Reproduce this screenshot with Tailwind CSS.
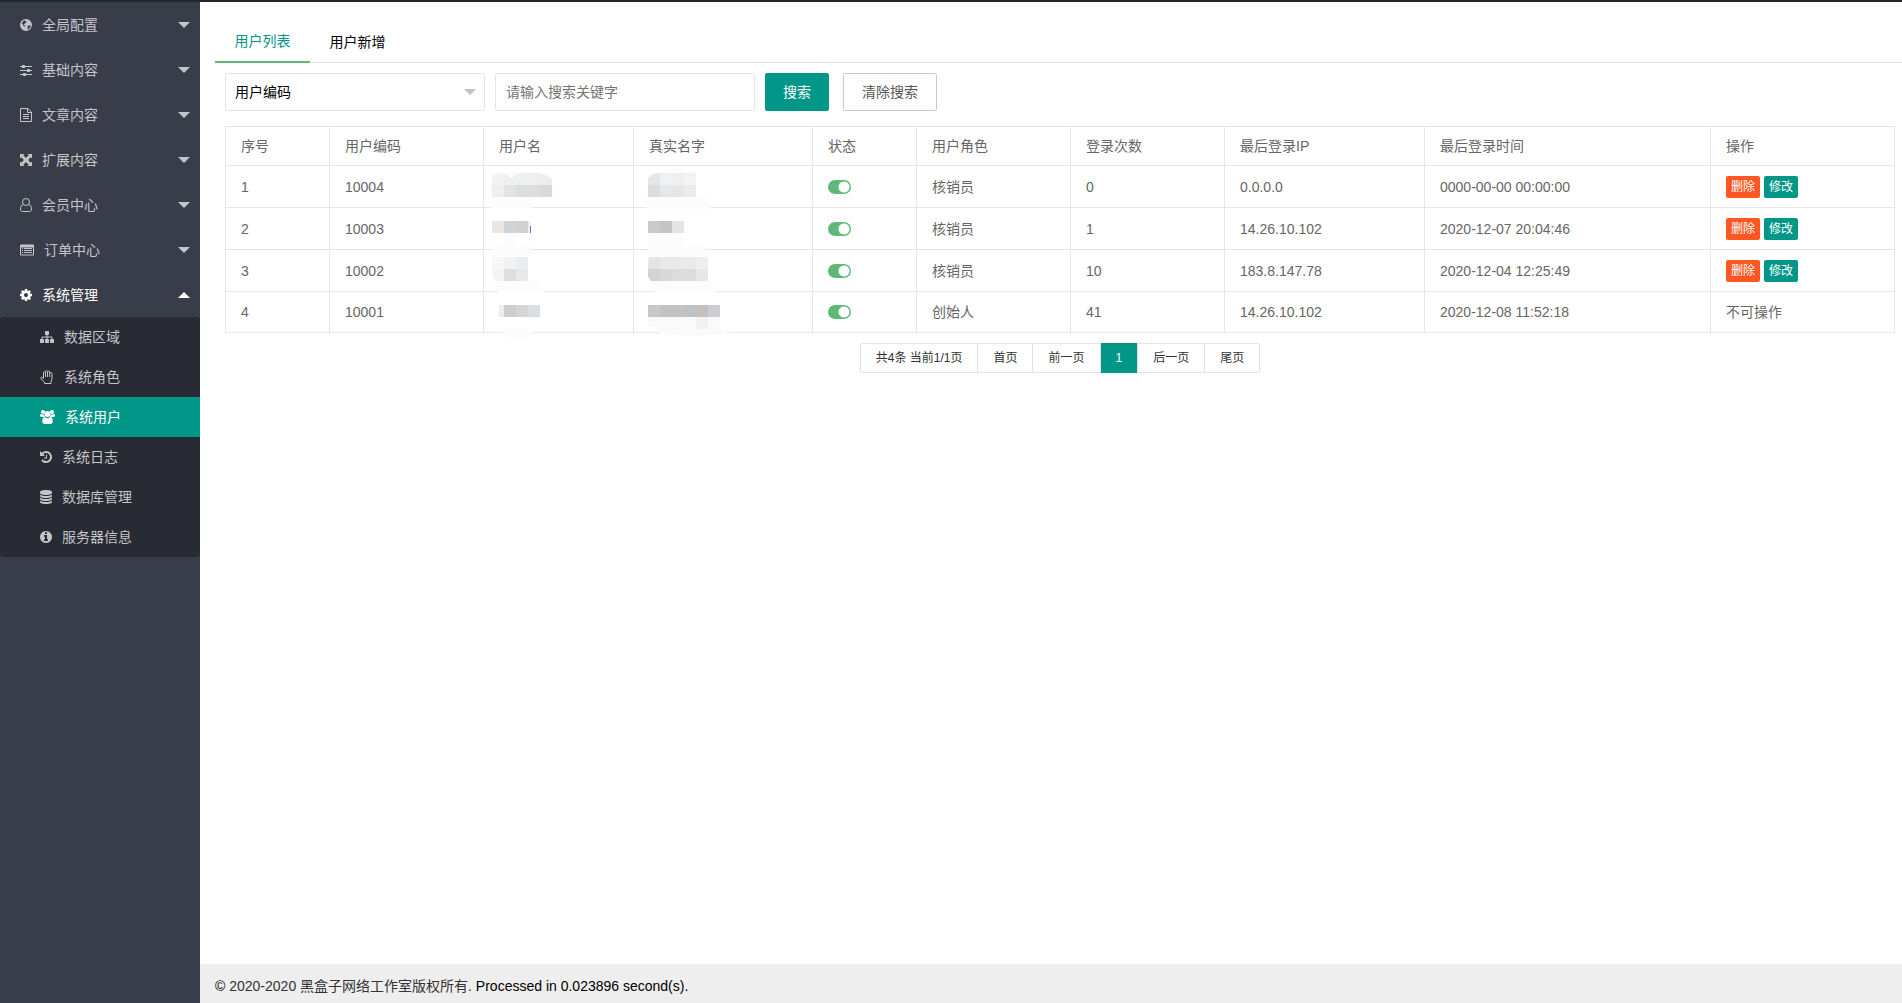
<!DOCTYPE html>
<html lang="zh-CN">
<head>
<meta charset="utf-8">
<title>用户列表</title>
<script src="https://cdn.jsdelivr.net/npm/@tailwindcss/browser@4"></script>
</head>
<body class="flex min-h-screen flex-col border-t-2 border-[#23262e] bg-white font-['Liberation_Sans','Noto_Sans_CJK_SC',sans-serif] text-sm text-[#666]">
<div class="flex flex-1">

<nav class="w-[200px] shrink-0 bg-[#393d49] text-[#c4c5c8]">
  <a href="#" class="flex h-[45px] items-center gap-2.5 pr-2.5 pl-5">
    <svg class="h-3.5 w-3" viewBox="0 0 12 14" fill="currentColor"><path fill-rule="evenodd" d="M6 1a6 6 0 1 0 0 12A6 6 0 0 0 6 1ZM5.200 2.200 4.600 3l.8.3.6-.5.7.6-.8.9.2.7-1 .2-.8.9-.9.1.5.9.9.2.6.9-.5.5-1.400-1-.9-.9-.6-1.500.4-1.100L3.600 2.700ZM7.700 8.100l1.100-.7 1.400.2.5-.4-.2 1.700-1 1.400-1.300 1.100-.6-.3.1-1.500Z"/></svg>
    <span>全局配置</span>
    <svg class="ml-auto h-1.5 w-3" viewBox="0 0 12 6" fill="currentColor"><path d="M0 0h12L6 6Z"/></svg>
  </a>
  <a href="#" class="flex h-[45px] items-center gap-2.5 pr-2.5 pl-5">
    <svg class="h-3.5 w-3" viewBox="0 0 12 14" fill="currentColor"><path d="M0 3h12v1H0zM0 7h12v1H0zM0 11h12v1H0z"/><rect x="2" y="2" width="3" height="3" rx=".5"/><rect x="7" y="6" width="3" height="3" rx=".5"/><rect x="3" y="10" width="3" height="3" rx=".5"/></svg>
    <span>基础内容</span>
    <svg class="ml-auto h-1.5 w-3" viewBox="0 0 12 6" fill="currentColor"><path d="M0 0h12L6 6Z"/></svg>
  </a>
  <a href="#" class="flex h-[45px] items-center gap-2.5 pr-2.5 pl-5">
    <svg class="h-3.5 w-3" viewBox="0 0 12 14" fill="none" stroke="currentColor"><path d="M.5.5h7.300l3.700 3.700v9.300H.5ZM7.500.5v4h4M3 6.500h6M3 8.500h6M3 10.500h6"/></svg>
    <span>文章内容</span>
    <svg class="ml-auto h-1.5 w-3" viewBox="0 0 12 6" fill="currentColor"><path d="M0 0h12L6 6Z"/></svg>
  </a>
  <a href="#" class="flex h-[45px] items-center gap-2.5 pr-2.5 pl-5">
    <svg class="h-3.5 w-3" viewBox="0 0 12 14" fill="currentColor"><path d="M0 1h4.500L3.300 2.300 6 5l2.700-2.700L7.500 1H12v4.500l-1.300-1.200L8 7l2.700 2.700L12 8.500V13H7.500l1.200-1.300L6 9l-2.700 2.700L4.500 13H0V8.500l1.300 1.200L4 7 1.300 4.300 0 5.500Z"/></svg>
    <span>扩展内容</span>
    <svg class="ml-auto h-1.5 w-3" viewBox="0 0 12 6" fill="currentColor"><path d="M0 0h12L6 6Z"/></svg>
  </a>
  <a href="#" class="flex h-[45px] items-center gap-2.5 pr-2.5 pl-5">
    <svg class="h-3.5 w-3" viewBox="0 0 12 14" fill="none" stroke="currentColor"><circle cx="6" cy="4" r="3.500"/><path d="M3.300 6.500C1.300 6.900.5 8.700.5 11c0 1.500.8 2.500 2 2.500h7c1.200 0 2-1 2-2.500 0-2.300-.8-4.100-2.800-4.500"/></svg>
    <span>会员中心</span>
    <svg class="ml-auto h-1.5 w-3" viewBox="0 0 12 6" fill="currentColor"><path d="M0 0h12L6 6Z"/></svg>
  </a>
  <a href="#" class="flex h-[45px] items-center gap-2.5 pr-2.5 pl-5">
    <svg class="h-3.5 w-3.5" viewBox="0 0 14 14" fill="currentColor"><path fill-rule="evenodd" d="M1 1.500h12a1 1 0 0 1 1 1v9a1 1 0 0 1-1 1H1a1 1 0 0 1-1-1v-9a1 1 0 0 1 1-1ZM1 4.500v7h12v-7Z"/><path d="M2 5h1v1H2zM4 5h8v1H4zM2 7h1v1H2zM4 7h8v1H4zM2 9h1v1H2zM4 9h8v1H4z"/></svg>
    <span>订单中心</span>
    <svg class="ml-auto h-1.5 w-3" viewBox="0 0 12 6" fill="currentColor"><path d="M0 0h12L6 6Z"/></svg>
  </a>
  <a href="#" class="flex h-[45px] items-center gap-2.5 pr-2.5 pl-5 text-white">
    <svg class="h-3.5 w-3" viewBox="128 0 1536 1792" fill="currentColor"><path d="M1152 896q0-106-75-181t-181-75-181 75-75 181 75 181 181 75 181-75 75-181zm512-109v222q0 12-8 23t-20 13l-185 28q-19 54-39 91 35 50 107 138 10 12 10 25t-9 23q-27 37-99 108t-94 71q-12 0-26-9l-138-108q-44 23-91 38-16 136-29 186-7 28-36 28h-222q-14 0-24.500-8.500t-11.500-21.500l-28-184q-49-16-90-37l-141 107q-10 9-25 9-14 0-25-11-126-114-165-168-7-10-7-23 0-12 8-23 15-21 51-66.500t54-70.500q-27-50-41-99l-183-27q-13-2-21-12.500t-8-23.500v-222q0-12 8-23t19-13l186-28q14-46 39-92-40-57-107-138-10-12-10-24 0-10 9-23 26-36 98.500-107.500t94.500-71.500q13 0 26 10l138 107q44-23 91-38 16-136 29-186 7-28 36-28h222q14 0 24.500 8.500t11.500 21.500l28 184q49 16 90 37l142-107q9-9 24-9 13 0 25 10 129 119 165 170 7 8 7 22 0 12-8 23-15 21-51 66.500t-54 70.500q26 50 41 98l183 28q13 2 21 12.500t8 23.500z"/></svg>
    <span>系统管理</span>
    <svg class="ml-auto h-1.5 w-3" viewBox="0 0 12 6" fill="currentColor"><path d="M0 6h12L6 0Z"/></svg>
  </a>
  <div class="rounded-sm bg-[#282b33]">
    <a href="#" class="flex h-10 items-center gap-2.5 pl-10">
      <svg class="h-3.5 w-3.5" viewBox="0 0 1792 1792" fill="currentColor"><path d="M1792 1248v320q0 40-28 68t-68 28h-320q-40 0-68-28t-28-68v-320q0-40 28-68t68-28h96v-192h-512v192h96q40 0 68 28t28 68v320q0 40-28 68t-68 28h-320q-40 0-68-28t-28-68v-320q0-40 28-68t68-28h96v-192h-512v192h96q40 0 68 28t28 68v320q0 40-28 68t-68 28h-320q-40 0-68-28t-28-68v-320q0-40 28-68t68-28h96v-192q0-52 38-90t90-38h512v-192h-96q-40 0-68-28t-28-68v-320q0-40 28-68t68-28h320q40 0 68 28t28 68v320q0 40-28 68t-68 28h-96v192h512q52 0 90 38t38 90v192h96q40 0 68 28t28 68z"/></svg>
      <span>数据区域</span>
    </a>
    <a href="#" class="flex h-10 items-center gap-2.5 pl-10">
      <svg class="h-3.5 w-3.5" viewBox="0 0 14 14" fill="none" stroke="currentColor" stroke-linejoin="round"><path d="M4.500 13.500v-1.200L1 8.900C0 7.800 1.400 6.600 2.400 7.500L3.500 8.500V2.800c0-1.300 2-1.300 2 0 0-.4 0-1 0-1.200 0-1.400 2-1.400 2 0v.6c0-1.300 2.200-1.300 2.200 0v1.200c0-1.200 2.300-1.200 2.300 0v4.600c0 1.600-1 2.300-1 4.200v1.300ZM5.500 2.800V7M7.500 2v5M9.700 2.500V7"/></svg>
      <span>系统角色</span>
    </a>
    <a href="#" class="flex h-10 items-center gap-2.5 bg-[#009688] pl-10 text-white">
      <svg class="h-3.5 w-[15px]" viewBox="0 0 15 14" fill="currentColor"><circle cx="3" cy="2" r="2"/><circle cx="12" cy="2" r="2"/><circle cx="7.500" cy="4" r="2.900"/><path d="M1.300 4c1 .7 2.200.7 3 .3-.1 1 .3 2 .9 2.700H1.500C.5 7 0 6.500 0 5.800 0 4.700.4 3.700 1.300 4ZM13.700 4c-1 .7-2.200.7-3 .3.1 1-.3 2-.9 2.700h3.700c1 0 1.500-.5 1.500-1.200 0-1.100-.4-2.100-1.300-1.800ZM4.500 7.100c1.800 1.500 4.200 1.500 6 0 1.500.1 2.200 2 2.200 4.500 0 1.500-.9 2.400-2.200 2.400h-6c-1.300 0-2.200-.9-2.200-2.400 0-2.500.7-4.400 2.200-4.500Z"/></svg>
      <span>系统用户</span>
    </a>
    <a href="#" class="flex h-10 items-center gap-2.5 pl-10">
      <svg class="h-3.5 w-3" viewBox="128 0 1536 1792" fill="currentColor"><path d="M1664 896q0 156-61 298t-164 245-245 164-298 61q-172 0-327-72.500t-264-204.500q-7-10-6.500-22.500t8.500-20.500l137-138q10-9 25-9 16 2 23 12 73 95 179 147t225 52q104 0 198.500-40.500t163.500-109.500 109.500-163.500 40.500-198.500-40.500-198.500-109.500-163.500-163.500-109.500-198.500-40.500q-98 0-188 35.500t-160 101.500l137 138q31 30 14 69-17 40-59 40h-448q-26 0-45-19t-19-45v-448q0-42 40-59 39-17 69 14l130 129q107-101 244.500-156.500t284.500-55.500q156 0 298 61t245 164 164 245 61 298zm-640-288v448q0 14-9 23t-23 9h-320q-14 0-23-9t-9-23v-64q0-14 9-23t23-9h224v-352q0-14 9-23t23-9h64q14 0 23 9t9 23z"/></svg>
      <span>系统日志</span>
    </a>
    <a href="#" class="flex h-10 items-center gap-2.5 pl-10">
      <svg class="h-3.5 w-3" viewBox="128 0 1536 1792" fill="currentColor"><path d="M896 768q237 0 443-43t325-127v170q0 69-103 128t-280 93.500-385 34.500-385-34.500-280-93.500-103-128v-170q119 84 325 127t443 43zm0 768q237 0 443-43t325-127v170q0 69-103 128t-280 93.500-385 34.500-385-34.500-280-93.500-103-128v-170q119 84 325 127t443 43zm0-384q237 0 443-43t325-127v170q0 69-103 128t-280 93.500-385 34.500-385-34.500-280-93.500-103-128v-170q119 84 325 127t443 43zm0-1152q208 0 385 34.500t280 93.500 103 128v128q0 69-103 128t-280 93.500-385 34.500-385-34.500-280-93.500-103-128v-128q0-69 103-128t280-93.500 385-34.500z"/></svg>
      <span>数据库管理</span>
    </a>
    <a href="#" class="flex h-10 items-center gap-2.5 pl-10">
      <svg class="h-3.5 w-3" viewBox="128 0 1536 1792" fill="currentColor"><path d="M1152 1376v-160q0-14-9-23t-23-9h-96v-512q0-14-9-23t-23-9h-320q-14 0-23 9t-9 23v160q0 14 9 23t23 9h96v320h-96q-14 0-23 9t-9 23v160q0 14 9 23t23 9h448q14 0 23-9t9-23zm-128-896v-160q0-14-9-23t-23-9h-192q-14 0-23 9t-9 23v160q0 14 9 23t23 9h192q14 0 23-9t9-23zm640 416q0 209-103 385.500t-279.500 279.500-385.500 103-385.500-103-279.500-279.500-103-385.500 103-385.500 279.500-279.500 385.500-103 385.500 103 279.500 279.500 103 385.500z"/></svg>
      <span>服务器信息</span>
    </a>
  </div>
</nav>

<div class="flex min-w-0 flex-1 flex-col">
  <main class="flex-1 pt-5 pl-[15px]">
    <div class="flex border-b border-[#e6e6e6] leading-10 text-black">
      <a href="#" class="-mb-px w-[95px] border-b-2 border-[#5fb878] text-center leading-[39px] text-[#009688]">用户列表</a>
      <a href="#" class="w-[95px] text-center">用户新增</a>
    </div>

    <div class="pt-2.5 pr-[7px] pl-2.5">
      <form class="flex">
        <div class="relative mr-2.5 w-[260px]">
          <select aria-label="搜索字段" class="h-[38px] w-full appearance-none rounded-xs border border-[#e6e6e6] bg-white pr-8 pl-[9px] text-black">
            <option>用户编码</option>
          </select>
          <svg class="pointer-events-none absolute top-4 right-[9px] h-1.5 w-3" viewBox="0 0 12 6" fill="#c2c2c2"><path d="M0 0h12L6 6Z"/></svg>
        </div>
        <input type="text" aria-label="搜索关键字" placeholder="请输入搜索关键字" class="mr-2.5 h-[38px] w-[260px] rounded-xs border border-[#e6e6e6] px-2.5 placeholder:text-[#757575]">
        <button type="button" class="mr-3.5 h-[38px] w-16 rounded-xs bg-[#009688] text-white">搜索</button>
        <button type="button" class="h-[38px] w-[94px] rounded-xs border border-[#c9c9c9] text-[#555]">清除搜索</button>
      </form>

      <table class="mt-[15px] w-full table-fixed border-collapse [&_td]:border [&_td]:border-[#e6e6e6] [&_td]:px-[15px] [&_th]:border [&_th]:border-[#e6e6e6] [&_th]:px-[15px] [&_th]:text-left [&_th]:font-normal">
        <colgroup>
          <col class="w-[104px]"><col class="w-[154px]"><col class="w-[150px]"><col class="w-[179px]"><col class="w-[104px]"><col class="w-[154px]"><col class="w-[154px]"><col class="w-[200px]"><col class="w-[286px]"><col class="w-[184px]">
        </colgroup>
        <thead>
          <tr class="h-[39px]"><th>序号</th><th>用户编码</th><th>用户名</th><th>真实名字</th><th>状态</th><th>用户角色</th><th>登录次数</th><th>最后登录IP</th><th>最后登录时间</th><th>操作</th></tr>
        </thead>
        <tbody>
          <tr class="h-[42px]">
            <td>1</td><td>10004</td>
            <td class="relative">
              <svg class="absolute top-0 left-0 h-[42px] w-[90px] overflow-visible" viewBox="0 0 90 42"><path fill="#fcfcfc" d="M5 18Q7 5 20 6Q50 2 68 13L70 30Q62 33 56 30H50Q50 37 47 42H7Q4 30 5 18Z"/><path fill="#f2f2f2" d="M8 19V12Q13 5 21 8L28 12V19Z"/><path fill="#eeeff0" d="M20 19V9L28 12Q31 7 38 7H54V19Z"/><path fill="#ededed" d="M54 7Q64 9 68 13V19H54Z"/><path fill="#f0efee" d="M8 19h12v12H8z"/><path fill="#e1e3e6" d="M20 19h12v12H20z"/><path fill="#dcdddd" d="M32 19h24v12H32z"/><path fill="#d9d9d9" d="M56 19h12v12H56z"/></svg>
            </td>
            <td class="relative">
              <svg class="absolute top-0 left-0 h-[42px] w-[90px] overflow-visible" viewBox="0 0 90 42"><path fill="#fcfcfc" d="M20 10Q36-3 62 5V31H74L77 43H12V31Z"/><path fill="#e6e6e6" d="M14 19V12Q18 7 26 7V19Z"/><path fill="#eff1f4" d="M26 7h12v12H26z"/><path fill="#efefee" d="M38 7h12v12H38z"/><path fill="#f3f3f4" d="M50 7h12v12H50z"/><path fill="#dcdcdc" d="M14 19h12v12H14z"/><path fill="#e6e7e9" d="M26 19h12v12H26z"/><path fill="#e7e6e4" d="M38 19h12v12H38z"/><path fill="#e9ebee" d="M50 19h12v12H50z"/></svg>
            </td>
            <td><input type="checkbox" checked aria-label="状态" class="block h-3.5 w-[23px] appearance-none rounded-full bg-[#5fb878] bg-[radial-gradient(circle_at_16px_7px,#fff_5px,transparent_6px)]"></td>
            <td>核销员</td><td>0</td><td>0.0.0.0</td><td>0000-00-00 00:00:00</td>
            <td><div class="flex gap-1"><button type="button" class="h-[22px] w-[34px] rounded-xs bg-[#ff5722] text-xs text-white">删除</button><button type="button" class="h-[22px] w-[34px] rounded-xs bg-[#009688] text-xs text-white">修改</button></div></td>
          </tr>
          <tr class="h-[42px]">
            <td>2</td><td>10003</td>
            <td class="relative">
              <svg class="absolute top-0 left-0 h-[42px] w-[90px] overflow-visible" viewBox="0 0 90 42"><path fill="#fcfcfc" d="M20 25h12v12H20zM7 37H46L48 48H8Z"/><path fill="#e9e6e3" d="M8 13h12v12H8z"/><path fill="#cfd4d8" d="M20 13h12v12H20z"/><path fill="#d1d1d2" d="M32 13h12v12H32z"/><path fill="#eee" d="M44 13h2v12h-2z"/><path fill="#5b7fc4" d="M46 18h1v7h-1z"/></svg>
            </td>
            <td class="relative">
              <svg class="absolute top-0 left-0 h-[42px] w-[90px] overflow-visible" viewBox="0 0 90 42"><path fill="#fcfcfc" d="M14 25h36v12h19v4l12 4v4H14z"/><path fill="#cacac9" d="M14 13h12v12H14z"/><path fill="#c5c4c3" d="M26 13h12v12H26z"/><path fill="#e2e4e7" d="M38 13h12v12H38z"/></svg>
            </td>
            <td><input type="checkbox" checked aria-label="状态" class="block h-3.5 w-[23px] appearance-none rounded-full bg-[#5fb878] bg-[radial-gradient(circle_at_16px_7px,#fff_5px,transparent_6px)]"></td>
            <td>核销员</td><td>1</td><td>14.26.10.102</td><td>2020-12-07 20:04:46</td>
            <td><div class="flex gap-1"><button type="button" class="h-[22px] w-[34px] rounded-xs bg-[#ff5722] text-xs text-white">删除</button><button type="button" class="h-[22px] w-[34px] rounded-xs bg-[#009688] text-xs text-white">修改</button></div></td>
          </tr>
          <tr class="h-[42px]">
            <td>3</td><td>10002</td>
            <td class="relative">
              <svg class="absolute top-0 left-0 h-[42px] w-[90px] overflow-visible" viewBox="0 0 90 42"><path fill="#fcfcfc" d="M10 31H55L60 43H14Z"/><path fill="#f7f7f7" d="M8 7h12v12H8z"/><path fill="#f2f2f2" d="M20 7h12v12H20z"/><path fill="#ebecef" d="M32 7h12v12H32z"/><path fill="#f3f3f3" d="M8 19h12v12H11L8 25z"/><path fill="#dededf" d="M20 19h12v12H20z"/><path fill="#e7e9ec" d="M32 19h12v12H32z"/></svg>
            </td>
            <td class="relative">
              <svg class="absolute top-0 left-0 h-[42px] w-[90px] overflow-visible" viewBox="0 0 90 42"><path fill="#fcfcfc" d="M16 31H78L83 43H20Z"/><path fill="#e6e4e2" d="M15 7h11v12H14v-6z"/><path fill="#e9e9ea" d="M26 7h24v12H26z"/><path fill="#eaeaea" d="M50 7h12v12H50z"/><path fill="#eceef1" d="M62 7h12v12H62z"/><path fill="#d7d3d0" d="M14 19h12v12h-9l-3-4z"/><path fill="#d6d8dc" d="M26 19h12v12H26z"/><path fill="#dcdcdc" d="M38 19h24v12H38z"/><path fill="#e6e8e8" d="M62 19h12v12H62z"/></svg>
            </td>
            <td><input type="checkbox" checked aria-label="状态" class="block h-3.5 w-[23px] appearance-none rounded-full bg-[#5fb878] bg-[radial-gradient(circle_at_16px_7px,#fff_5px,transparent_6px)]"></td>
            <td>核销员</td><td>10</td><td>183.8.147.78</td><td>2020-12-04 12:25:49</td>
            <td><div class="flex gap-1"><button type="button" class="h-[22px] w-[34px] rounded-xs bg-[#ff5722] text-xs text-white">删除</button><button type="button" class="h-[22px] w-[34px] rounded-xs bg-[#009688] text-xs text-white">修改</button></div></td>
          </tr>
          <tr class="h-[41px]">
            <td>4</td><td>10001</td>
            <td class="relative">
              <svg class="absolute top-0 left-0 h-[42px] w-[90px] overflow-visible" viewBox="0 0 90 42"><path fill="#fcfcfc" d="M18 37H50Q46 49 34 49T18 37Z"/><path fill="#ededec" d="M15 13h5v12h-5z"/><path fill="#cfcdcb" d="M20 13h12v12H20z"/><path fill="#d5d5d5" d="M32 13h12v12H32z"/><path fill="#dadee2" d="M44 13h12v12H44z"/></svg>
            </td>
            <td class="relative">
              <svg class="absolute top-0 left-0 h-[42px] w-[90px] overflow-visible" viewBox="0 0 90 42"><path fill="#fafafa" d="M14 25H86V37H95L92 42Q60 46 26 42L22 36L14 33Z"/><path fill="#c9c8c7" d="M14 13h12v12H14z"/><path fill="#c3c3c3" d="M26 13h24v12H26z"/><path fill="#bfc2c5" d="M50 13h12v12H50z"/><path fill="#c3c1bf" d="M62 13h12v12H62z"/><path fill="#cbcdd0" d="M74 13h12v12H74z"/><path fill="#f1f1f1" d="M62 25h12v12H62z"/></svg>
            </td>
            <td><input type="checkbox" checked aria-label="状态" class="block h-3.5 w-[23px] appearance-none rounded-full bg-[#5fb878] bg-[radial-gradient(circle_at_16px_7px,#fff_5px,transparent_6px)]"></td>
            <td>创始人</td><td>41</td><td>14.26.10.102</td><td>2020-12-08 11:52:18</td><td>不可操作</td>
          </tr>
        </tbody>
      </table>

      <div class="mt-2.5 flex justify-center text-xs leading-7 text-[#333]">
        <span class="rounded-l-xs border border-[#e2e2e2] px-[15px]">共4条 当前1/1页</span>
        <a href="#" class="-ml-px border border-[#e2e2e2] px-[15px]">首页</a>
        <a href="#" class="-ml-px border border-[#e2e2e2] px-[15px]">前一页</a>
        <span class="border-y border-[#009688] bg-[#009688] px-[15px] text-white">1</span>
        <a href="#" class="border border-[#e2e2e2] px-[15px]">后一页</a>
        <a href="#" class="-ml-px rounded-r-xs border border-[#e2e2e2] px-[15px]">尾页</a>
      </div>
    </div>
  </main>

  <footer class="h-[39px] overflow-hidden bg-[#eee] px-[15px] leading-[44px] text-black">© <a href="#" class="text-[#333]">2020-2020 黑盒子网络工作室版权所有.</a> Processed in 0.023896 second(s).</footer>
</div>
</div>
</body>
</html>
